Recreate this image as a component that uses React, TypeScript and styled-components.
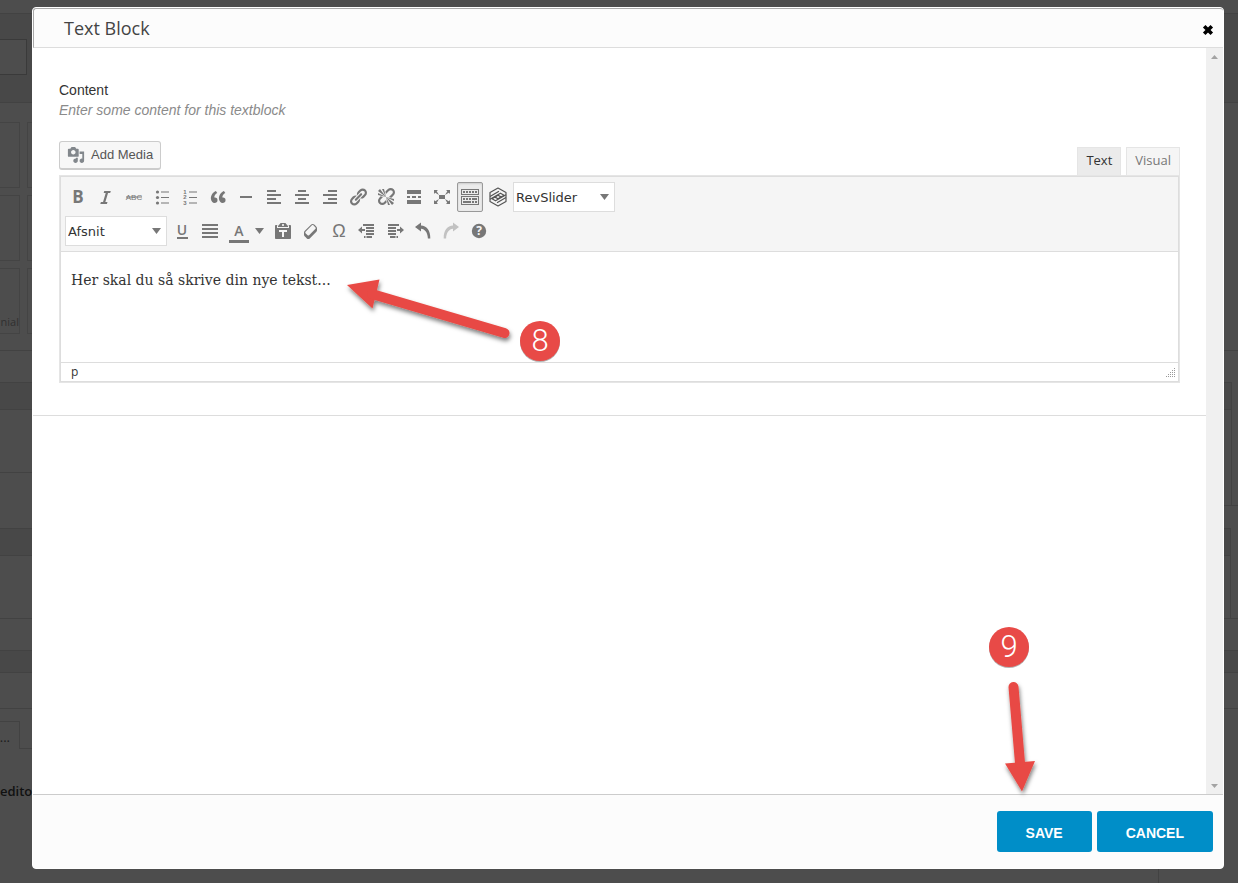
import React from "react";
import styled, { createGlobalStyle } from "styled-components";

const sans = '"Liberation Sans", Arial, sans-serif';
const open = '"Open Sans", sans-serif';
const wide = '"DejaVu Sans", Verdana, sans-serif';

const GlobalStyle = createGlobalStyle`
  * { box-sizing: border-box; }
  body { margin: 0; background: #4d4d4d; font-family: ${sans}; }
  button, select, textarea { font: inherit; color: inherit; margin: 0; }
  svg { display: block; flex: none; }
`;

/* ---------- dimmed page behind the dialog ---------- */

const Page = styled.div`
  display: grid;
  grid-template-columns: minmax(0, 1fr);
  min-height: 100vh;
`;

const Backdrop = styled.div`
  grid-area: 1 / 1;
  display: grid;
  grid-template-columns: 32px 1fr 14px;
  height: 100vh;
  overflow: hidden;
  background: #4d4d4d;
  color: #262626;
  font-family: ${open};
`;

const Strip = styled.div`
  display: flex;
  flex-direction: column;
  min-width: 0;
`;

const Band = styled.div<{ $h: number; $dark?: boolean; $line?: boolean; $inset?: number }>`
  flex: none;
  display: flex;
  height: ${(p) => p.$h}px;
  margin-right: ${(p) => p.$inset ?? 0}px;
  background: ${(p) => (p.$dark ? "#484848" : "transparent")};
  border-top: ${(p) => (p.$line ? "1px solid #424242" : "0")};
  border-right: ${(p) => (p.$inset ? "1px solid #424242" : "0")};
`;

const DimField = styled.div`
  width: 27px;
  height: 36px;
  margin-top: 25px;
  border: 1px solid #3a3a3a;
  border-left: 0;
  background: #4d4d4d;
`;

const DimTiles = styled.div`
  display: grid;
  grid-template-columns: 20px 5px;
  grid-auto-rows: 66px;
  gap: 7px;
  padding-top: 19px;
`;

const DimTile = styled.div<{ $first?: boolean }>`
  display: flex;
  align-items: flex-end;
  justify-content: flex-end;
  border: 1px solid #444;
  border-left-width: ${(p) => (p.$first ? 0 : 1)}px;
  border-right-width: ${(p) => (p.$first ? 1 : 0)}px;
  font-size: 11px;
  line-height: 22px;
  color: #303030;
`;

const DimTab = styled.div`
  display: flex;
  justify-content: flex-end;
  width: 20px;
  height: 28px;
  margin-top: 12px;
  padding-right: 9px;
  border-top: 1px solid #424242;
  border-right: 1px solid #424242;
  font-size: 13px;
  line-height: 30px;
  color: #1c1c1c;
`;

const DimBox = styled.div`
  width: 12px;
  margin-top: 12px;
  height: 28px;
  border-bottom: 1px solid #424242;
`;

const DimHeading = styled.div`
  font-size: 13px;
  font-weight: 600;
  line-height: 20px;
  color: #111;
`;

const DimFooter = styled.div`
  align-self: end;
  height: 14px;
  margin-right: 65px;
  border-right: 1px solid #424242;
`;

/* ---------- dialog ---------- */

const DialogArea = styled.div`
  grid-area: 1 / 1;
  z-index: 1;
  display: flex;
  padding: 7px 14px 14px 32px;
`;

const Dialog = styled.section`
  position: relative;
  flex: 1;
  min-width: 0;
  display: flex;
  flex-direction: column;
  border: 1px solid #fff;
  border-radius: 4px;
  background: #fff;
`;

const DialogHeader = styled.header`
  display: flex;
  align-items: center;
  justify-content: space-between;
  height: 40px;
  padding: 0 9px 0 30px;
  border: 0 solid #aaa;
  border-width: 1px 0 1px 1px;
  border-bottom-color: #ddd;
  border-top-left-radius: 3px;
  border-top-right-radius: 3px;
  background: #fcfcfc;
`;

const Title = styled.h1`
  margin: 0;
  font: 400 18px/24px ${open};
  color: #444;
`;

const CloseButton = styled.button`
  display: flex;
  padding: 4px 0 0;
  border: 0;
  background: none;
  cursor: pointer;
`;

const DialogBody = styled.div`
  flex: 1;
  display: flex;
`;

const Scroller = styled.main`
  flex: 1;
  min-width: 0;
`;

const ScrollTrack = styled.div`
  display: flex;
  flex-direction: column;
  justify-content: space-between;
  width: 17px;
  background: #f0f0f0;
`;

const ScrollButton = styled.button`
  display: flex;
  align-items: center;
  justify-content: center;
  height: 17px;
  padding: 0;
  border: 0;
  background: none;
`;

const Field = styled.div`
  padding: 32px 26px;
  border-bottom: 1px solid #ddd;
`;

const FieldLabel = styled.label`
  display: block;
  font-size: 14px;
  line-height: 20px;
  color: #333;
`;

const FieldHint = styled.p`
  margin: 0;
  font-size: 14px;
  line-height: 20px;
  font-style: italic;
  color: #8a8a8a;
`;

const EditorTop = styled.div`
  display: flex;
  justify-content: space-between;
  height: 34px;
  margin-top: 21px;
`;

const MediaButton = styled.button`
  display: flex;
  align-items: center;
  gap: 6px;
  height: 29px;
  padding: 0 7px;
  border: 1px solid #ccc;
  border-bottom-width: 2px;
  border-radius: 3px;
  background: #f7f7f7;
  font-size: 13px;
  line-height: 26px;
  color: #555;
  svg { color: #82878c; }
`;

const Tabs = styled.div`
  display: flex;
  align-items: flex-end;
  gap: 5px;
`;

const Tab = styled.button<{ $active?: boolean }>`
  height: 28px;
  padding: 0 8px 3px;
  border: 1px solid #e5e5e5;
  border-bottom: 0;
  background: ${(p) => (p.$active ? "#ebebeb" : "#f5f5f5")};
  font: 400 13px/24px ${open};
  color: ${(p) => (p.$active ? "#333" : "#777")};
`;

const EditorFrame = styled.div`
  border: 1px solid #e5e5e5;
`;

const Editor = styled.div`
  border: 1px solid #ddd;
`;

const Toolbar = styled.div`
  display: flex;
  flex-direction: column;
  gap: 4px;
  padding: 5px 4px;
  border-bottom: 1px solid #ddd;
  background: #f5f5f5;
`;

const ToolRow = styled.div`
  display: flex;
  gap: 2px;
`;

const ToolButton = styled.button<{ $pressed?: boolean; $w?: number; $faded?: boolean }>`
  display: flex;
  align-items: center;
  justify-content: center;
  gap: 6px;
  width: ${(p) => p.$w ?? 26}px;
  height: 30px;
  padding: 0;
  border: 1px solid ${(p) => (p.$pressed ? "#999" : "transparent")};
  border-radius: 2px;
  background: ${(p) => (p.$pressed ? "#ebebeb" : "none")};
  box-shadow: ${(p) => (p.$pressed ? "inset 0 1px 2px #ccc" : "none")};
  color: #777;
  svg { opacity: ${(p) => (p.$faded ? 0.4 : 1)}; }
`;

const SelectBox = styled.div`
  display: grid;
  grid-template-columns: minmax(0, 1fr);
  align-items: center;
  width: 102px;
  height: 30px;
  svg {
    grid-area: 1 / 1;
    justify-self: end;
    margin-right: 6px;
    pointer-events: none;
    color: #777;
  }
`;

const Select = styled.select`
  grid-area: 1 / 1;
  appearance: none;
  width: 100%;
  height: 30px;
  padding: 2px 20px 0 2px;
  border: 1px solid #ddd;
  border-radius: 0;
  background: #fff;
  font: 400 13px/20px ${wide};
  color: #333;
`;

const TextArea = styled.textarea`
  display: block;
  width: 100%;
  height: 110px;
  padding: 18px 10px;
  border: 0;
  outline: 0;
  resize: none;
  background: #fff;
  font: 400 14px/20px "DejaVu Serif", Georgia, serif;
  color: #333;
`;

const StatusBar = styled.div`
  display: flex;
  align-items: center;
  justify-content: space-between;
  height: 19px;
  padding: 0 2px 0 10px;
  border-top: 1px solid #ddd;
  font: 400 12px/18px ${open};
  color: #333;
`;

const DialogFooter = styled.footer`
  display: flex;
  justify-content: flex-end;
  gap: 5px;
  padding: 16px 10px;
  border-top: 1px solid #ccc;
  border-radius: 0 0 3px 3px;
  background: #fcfcfc;
`;

const ActionButton = styled.button`
  height: 41px;
  padding: 2px 29px 0;
  border: 0;
  border-radius: 3px;
  background: #008ec8;
  font: 700 14px/20px ${sans};
  color: #fff;
`;

/* ---------- tutorial markers drawn over the dialog ---------- */

const Marker = styled.div`
  position: absolute;
  pointer-events: none;
`;

const TopMarker = styled(Marker)`
  top: 262px;
  left: 307px;
`;

const BottomMarker = styled(Marker)`
  right: 173px;
  bottom: 66px;
`;

/* ---------- icons ---------- */

const glyphs: Record<string, string> = {
  media:
    "M13 11V4c0-.55-.45-1-1-1h-1.67L9 1H5L3.67 3H2c-.55 0-1 .45-1 1v7c0 .55.45 1 1 1h10c.55 0 1-.45 1-1zM7 4.5c1.38 0 2.5 1.12 2.5 2.5S8.38 9.5 7 9.5 4.5 8.38 4.5 7 5.62 4.5 7 4.5zM14 6h5v10.5c0 1.38-1.12 2.5-2.5 2.5S14 17.88 14 16.5s1.12-2.5 2.5-2.5c.17 0 .34.02.5.05V9h-3V6zm-4 8.05V13h2v3.5c0 1.38-1.12 2.5-2.5 2.5S7 17.88 7 16.5 8.12 14 9.5 14c.17 0 .34.02.5.05z",
  italic: "M14.78 4h-6.500l-.6 2h2.050l-2.700 9H4.900l-.6 2h6.600l.6-2H9.350l2.700-9h2.130z",
  quote:
    "M9.49 13.22c0-.74-.2-1.38-.61-1.9-.62-.78-1.83-.88-2.53-.72-.29-1.65 1.11-3.75 2.92-4.65L7.88 4c-2.73 1.3-5.42 4.28-4.96 8.05C3.21 14.43 4.59 16 6.54 16c.85 0 1.56-.25 2.12-.75s.83-1.18.83-2.03zm8.05 0c0-.74-.2-1.38-.61-1.9-.63-.78-1.83-.88-2.53-.72-.29-1.65 1.11-3.75 2.92-4.65L15.93 4c-2.73 1.3-5.41 4.28-4.95 8.05.29 2.38 1.66 3.95 3.61 3.95.85 0 1.56-.25 2.12-.75s.83-1.18.83-2.03z",
  rule: "M4 9h12v2H4z",
  left: "M12 5V3H3v2h9zm5 4V7H3v2h14zm-5 4v-2H3v2h9zm5 4v-2H3v2h14z",
  center: "M14 5V3H6v2h8zm3 4V7H3v2h14zm-3 4v-2H6v2h8zm3 4v-2H3v2h14z",
  right: "M17 5V3H8v2h9zm0 4V7H3v2h14zm0 4v-2H8v2h9zm0 4v-2H3v2h14z",
  justify: "M2 3h16v2H2V3zm0 4h16v2H2V7zm0 4h16v2H2v-2zm0 4h16v2H2v-2z",
  link: "M17.74 2.76c1.68 1.69 1.68 4.41 0 6.1l-1.53 1.52c-1.12 1.12-2.7 1.47-4.14 1.09l2.62-2.61.76-.77.76-.76c.84-.84.84-2.2 0-3.04-.84-.85-2.2-.85-3.04 0l-.77.76-3.38 3.38c-.37-1.44-.02-3.02 1.1-4.14l1.52-1.53c1.69-1.68 4.42-1.68 6.1 0zM8.59 13.43l5.34-5.34c.42-.42.42-1.1 0-1.52-.44-.43-1.13-.39-1.53 0l-5.33 5.34c-.42.42-.42 1.1 0 1.52.44.43 1.13.39 1.52 0zm-.76 2.29l4.14-4.15c.38 1.44.03 3.02-1.09 4.14l-1.52 1.53c-1.69 1.68-4.41 1.68-6.1 0-1.68-1.68-1.68-4.42 0-6.1l1.53-1.52c1.12-1.12 2.7-1.47 4.14-1.1l-4.14 4.15c-.85.84-.85 2.2 0 3.05.84.84 2.2.84 3.04 0z",
  unlink:
    "M17.74 2.26c1.68 1.69 1.68 4.41 0 6.1l-1.53 1.52c-.32.33-.69.58-1.08.77L13 10l1.69-1.64.76-.77.76-.76c.84-.84.84-2.2 0-3.04-.84-.85-2.2-.85-3.04 0l-.77.76-.76.76L10 7l-.65-2.14c.19-.38.44-.75.77-1.07l1.52-1.53c1.69-1.68 4.42-1.68 6.1 0zM2 4l8 6-6-8zm4-2l4 8-2-8H6zM2 6l8 4-8-2V6zm7.36 7.69L10 13l.74 2.35-1.38 1.39c-1.69 1.68-4.41 1.68-6.1 0-1.68-1.68-1.68-4.42 0-6.1l1.39-1.38L7 10l-.69.64-1.52 1.53c-.85.84-.85 2.2 0 3.04.84.85 2.2.85 3.04 0zM18 16l-8-6 6 8zm-4 2l-4-8 2 8h2zm4-4l-8-4 8 2v2z",
  more: "M17 7V3H3v4h14zM6 11V9H3v2h3zm6 0V9H8v2h4zm5 0V9h-3v2h3zm0 6v-4H3v4h14z",
  expand:
    "M7 8h6v4H7zm-5 5v4h4l-1.2-1.2L7 12l-3.8 2.2M14 17h4v-4l-1.2 1.2L13 12l2.2 3.8M14 3l1.3 1.3L13 8l3.8-2.2L18 7V3M6 3H2v4l1.2-1.2L7 8 4.7 4.3",
  keyboard:
    "M19 2v6H1V2h18zm-1 5V3H2v4h16zM5 4v2H3V4h2zm3 0v2H6V4h2zm3 0v2H9V4h2zm3 0v2h-2V4h2zm3 0v2h-2V4h2zm2 5v9H1V9h18zm-1 8v-7H2v7h16zM5 11v2H3v-2h2zm3 0v2H6v-2h2zm3 0v2H9v-2h2zm6 0v2h-5v-2h5zm-6 3v2H3v-2h8zm3 0v2h-2v-2h2zm3 0v2h-2v-2h2z",
  paste:
    "M12.38 2L15 5v1H5V5l2.64-3h4.74zM10 5c.55 0 1-.44 1-1 0-.55-.45-1-1-1s-1 .45-1 1c0 .56.45 1 1 1zm5.45-1H17c.55 0 1 .45 1 1v12c0 .56-.45 1-1 1H3c-.55 0-1-.44-1-1V5c0-.55.45-1 1-1h1.55L4 4.63V7h12V4.63zM14 11V9H6v2h3v5h2v-5h3z",
  eraser:
    "M14.29 4.59l1.1 1.11c.41.4.61.94.61 1.47v2.12c0 .53-.2 1.07-.61 1.47l-6.63 6.63c-.4.41-.94.61-1.47.61s-1.07-.2-1.47-.61l-1.11-1.1-1.1-1.11c-.41-.4-.61-.94-.61-1.47v-2.12c0-.54.2-1.07.61-1.48l6.63-6.62c.4-.41.94-.61 1.47-.61s1.06.2 1.47.61zm-6.21 9.7l6.42-6.42c.39-.39.39-1.03 0-1.43L12.36 4.3c-.19-.19-.45-.29-.72-.29s-.52.1-.71.29l-6.42 6.42c-.39.4-.39 1.04 0 1.43l2.14 2.14c.38.38 1.04.38 1.43 0z",
  outdent: "M6 3h11v2H6zM9 6h8v2H9zM9 9h8v2H9zM9 12h8v2H9zM7 15h1.500v2H7zM9.500 15h5.500v2H9.500zM1 9l4-3.500V8h3v2H5v2.500z",
  indent: "M3 3h11v2H3zM3 6h8v2H3zM3 9h8v2H3zM3 12h8v2H3zM5 15h5.500v2H5zM11.500 15H13v2h-1.500zM19 9l-4-3.500V8h-3v2h3v2.500z",
  undo: "M8 1.500v3C13.500 5 17.500 9 17.300 17.500h-2.400C14.600 11.500 12 8.200 8 7.800v2.700L2 6z",
  redo: "M12 1.500v3C6.500 5 2.500 9 2.700 17.500h2.400C5.400 11.500 8 8.200 12 7.800v2.700L18 6z",
};

const Icon = ({ name, size = 20 }: { name: string; size?: number }) => (
  <svg width={size} height={size} viewBox="0 0 20 20" fill="currentColor" fillRule="evenodd" aria-hidden="true">
    <path d={glyphs[name]} />
  </svg>
);

const TextIcon = ({ children }: { children: React.ReactNode }) => (
  <svg
    width="20"
    height="20"
    viewBox="0 0 20 20"
    overflow="visible"
    fill="currentColor"
    textAnchor="middle"
    aria-hidden="true"
  >
    {children}
  </svg>
);

const Caret = () => (
  <svg width="9" height="6" viewBox="0 0 9 6" fill="currentColor" aria-hidden="true">
    <path d="M0 0h9L4.500 6z" />
  </svg>
);

const ListLines = () => <path d="M9 4.500h8v1H9zM9 10h8v1H9zM9 15.500h8v1H9z" />;

const BoldIcon = () => (
  <TextIcon>
    <text x="10" y="16" fontFamily={open} fontWeight="700" fontSize="17">B</text>
  </TextIcon>
);

const StrikeIcon = () => (
  <TextIcon>
    <text x="10" y="13" fontFamily={sans} fontSize="8">ABC</text>
    <path d="M2 9.500h16v1H2z" />
  </TextIcon>
);

const BulletIcon = () => (
  <TextIcon>
    <circle cx="5.500" cy="5" r="1.600" />
    <circle cx="5.500" cy="10.500" r="1.600" />
    <circle cx="5.500" cy="16" r="1.600" />
    <ListLines />
  </TextIcon>
);

const NumberIcon = () => (
  <TextIcon>
    <g fontFamily={sans} fontSize="6" fontWeight="700">
      <text x="5" y="7">1</text>
      <text x="5" y="12">2</text>
      <text x="5" y="18">3</text>
    </g>
    <ListLines />
  </TextIcon>
);

const BuilderIcon = () => (
  <TextIcon>
    <g fill="none" stroke="#555" strokeWidth="1.200" strokeLinejoin="round">
      <path d="M10 1l8 4.500v9L10 19l-8-4.500v-9z" />
      <path d="M2 12.300L12.500 6.200l3.500 2L10 11.700l-3-1.600" />
      <path d="M18 7.700L7.500 13.800l-3.500-2L10 8.300l3 1.600" />
      <path d="M2 9.500L11 4.200M18 10.500L9 15.800" />
    </g>
  </TextIcon>
);

const UnderlineIcon = () => (
  <TextIcon>
    <text x="10" y="14" fontFamily={open} fontWeight="600" fontSize="14">U</text>
    <path d="M5 16h11v2H5z" />
  </TextIcon>
);

const ColorIcon = () => (
  <TextIcon>
    <text x="10" y="15" fontFamily={open} fontWeight="600" fontSize="14">A</text>
    <path d="M0 19h20v3H0z" />
  </TextIcon>
);

const OmegaIcon = () => (
  <TextIcon>
    <text x="10" y="16" fontFamily={sans} fontSize="18">Ω</text>
  </TextIcon>
);

const HelpIcon = () => (
  <TextIcon>
    <circle cx="10" cy="10" r="7.200" />
    <text x="10" y="14" fill="#f5f5f5" fontFamily={open} fontWeight="700" fontSize="12">?</text>
  </TextIcon>
);

type Tool = { label: string; icon: React.ReactNode; pressed?: boolean; faded?: boolean };

const named = (label: string, name: string): Tool => ({ label, icon: <Icon name={name} /> });

const firstRow: Tool[] = [
  { label: "Bold", icon: <BoldIcon /> },
  named("Italic", "italic"),
  { label: "Strikethrough", icon: <StrikeIcon /> },
  { label: "Bulleted list", icon: <BulletIcon /> },
  { label: "Numbered list", icon: <NumberIcon /> },
  named("Blockquote", "quote"),
  named("Horizontal line", "rule"),
  named("Align left", "left"),
  named("Align center", "center"),
  named("Align right", "right"),
  named("Insert link", "link"),
  named("Remove link", "unlink"),
  named("Read more", "more"),
  named("Fullscreen", "expand"),
  { ...named("Toolbar toggle", "keyboard"), pressed: true },
  { label: "Shortcodes", icon: <BuilderIcon /> },
];

const alignRow: Tool[] = [{ label: "Underline", icon: <UnderlineIcon /> }, named("Justify", "justify")];

const lastRow: Tool[] = [
  named("Paste as text", "paste"),
  named("Clear formatting", "eraser"),
  { label: "Special character", icon: <OmegaIcon /> },
  named("Decrease indent", "outdent"),
  named("Increase indent", "indent"),
  named("Undo", "undo"),
  { ...named("Redo", "redo"), faded: true },
  { label: "Keyboard shortcuts", icon: <HelpIcon /> },
];

const Tools = ({ items }: { items: Tool[] }) => (
  <>
    {items.map((t) => (
      <ToolButton key={t.label} type="button" aria-label={t.label} $pressed={t.pressed} $faded={t.faded}>
        {t.icon}
      </ToolButton>
    ))}
  </>
);

const ToolSelect = ({ label, value }: { label: string; value: string }) => (
  <SelectBox>
    <Select aria-label={label} defaultValue={value}>
      <option>{value}</option>
    </Select>
    <Caret />
  </SelectBox>
);

const DimmedPage = () => (
  <Backdrop aria-hidden="true">
    <Strip>
      <Band $h={13} />
      <Band $h={89} $dark $line>
        <DimField />
      </Band>
      <Band $h={248} $line>
        <DimTiles>
          <DimTile $first />
          <DimTile />
          <DimTile $first />
          <DimTile />
          <DimTile $first>nial</DimTile>
          <DimTile />
        </DimTiles>
      </Band>
      <Band $h={32} $line />
      <Band $h={27} $dark $line />
      <Band $h={63} $line />
      <Band $h={56} $line />
      <Band $h={27} $dark $line />
      <Band $h={63} $line />
      <Band $h={32} $line />
      <Band $h={22} $dark $line />
      <Band $h={36} $line />
      <Band $h={73} $line>
        <DimTab>...</DimTab>
        <DimBox />
      </Band>
      <DimHeading>editor</DimHeading>
    </Strip>
    <DimFooter />
    <Strip>
      <Band $h={13} />
      <Band $h={89} $dark $line />
      <Band $h={248} $line />
      <Band $h={32} $line />
      <Band $h={27} $dark $line $inset={6} />
      <Band $h={96} $line $inset={6} />
      <Band $h={23} $line />
      <Band $h={27} $dark $line $inset={7} />
      <Band $h={63} $line $inset={7} />
      <Band $h={32} $line />
      <Band $h={22} $dark $line />
      <Band $h={36} $line />
      <Band $h={73} $line />
    </Strip>
  </Backdrop>
);

const MarkerShadow = ({ id }: { id: string }) => (
  <filter id={id} x="-20%" y="-20%" width="140%" height="150%">
    <feDropShadow dx="1" dy="3" stdDeviation="2" floodColor="#000" floodOpacity="0.5" />
  </filter>
);

const Badge = ({ cx, cy, n }: { cx: number; cy: number; n: number }) => (
  <>
    <circle cx={cx} cy={cy + 1} r="20" fill="#000" opacity="0.3" />
    <circle cx={cx} cy={cy} r="20" fill="#e84a47" />
    <text x={cx} y={cy + 10} textAnchor="middle" fontFamily={`Roboto, ${sans}`} fontWeight="300" fontSize="31" fill="#fff">
      {n}
    </text>
  </>
);

export default function App() {
  return (
    <>
      <GlobalStyle />
      <Page>
        <DimmedPage />
        <DialogArea>
          <Dialog role="dialog" aria-labelledby="dialog-title">
            <DialogHeader>
              <Title id="dialog-title">Text Block</Title>
              <CloseButton type="button" aria-label="Close">
                <svg width="12" height="12" viewBox="0 0 12 12" aria-hidden="true">
                  <path d="M2.200 2.200l7.600 7.600M9.800 2.200l-7.600 7.600" stroke="#000" strokeWidth="3.600" />
                </svg>
              </CloseButton>
            </DialogHeader>

            <DialogBody>
              <Scroller>
                <Field>
                  <FieldLabel htmlFor="content">Content</FieldLabel>
                  <FieldHint>Enter some content for this textblock</FieldHint>
                  <EditorTop>
                    <MediaButton type="button">
                      <Icon name="media" size={18} />
                      Add Media
                    </MediaButton>
                    <Tabs role="tablist">
                      <Tab type="button" role="tab" aria-selected="true" $active>
                        Text
                      </Tab>
                      <Tab type="button" role="tab" aria-selected="false">
                        Visual
                      </Tab>
                    </Tabs>
                  </EditorTop>
                  <EditorFrame>
                    <Editor>
                      <Toolbar>
                        <ToolRow>
                          <Tools items={firstRow} />
                          <ToolSelect label="Slider" value="RevSlider" />
                        </ToolRow>
                        <ToolRow>
                          <ToolSelect label="Paragraph format" value="Afsnit" />
                          <Tools items={alignRow} />
                          <ToolButton type="button" aria-label="Text color" $w={43}>
                            <ColorIcon />
                            <Caret />
                          </ToolButton>
                          <Tools items={lastRow} />
                        </ToolRow>
                      </Toolbar>
                      <TextArea id="content" spellCheck={false} defaultValue="Her skal du så skrive din nye tekst..." />
                      <StatusBar>
                        <span>p</span>
                        <svg width="11" height="11" viewBox="0 0 11 11" aria-hidden="true">
                          <g stroke="#999" strokeDasharray="1 1">
                            <path d="M9 1.500h2M7 3.500h4M5 5.500h6M3 7.500h8M1 9.500h10" />
                          </g>
                        </svg>
                      </StatusBar>
                    </Editor>
                  </EditorFrame>
                </Field>
              </Scroller>
              <ScrollTrack>
                <ScrollButton type="button" aria-label="Scroll up">
                  <svg width="7" height="4" viewBox="0 0 7 4" aria-hidden="true">
                    <path d="M0 4h7L3.500 0z" fill="#a3a3a3" />
                  </svg>
                </ScrollButton>
                <ScrollButton type="button" aria-label="Scroll down">
                  <svg width="7" height="4" viewBox="0 0 7 4" aria-hidden="true">
                    <path d="M0 0h7L3.500 4z" fill="#a3a3a3" />
                  </svg>
                </ScrollButton>
              </ScrollTrack>
            </DialogBody>

            <DialogFooter>
              <ActionButton type="button">SAVE</ActionButton>
              <ActionButton type="button">CANCEL</ActionButton>
            </DialogFooter>

            <TopMarker>
              <svg width="230" height="100" viewBox="340 270 230 100">
                <defs>
                  <MarkerShadow id="arrow-a" />
                </defs>
                <g filter="url(#arrow-a)" fill="#e84a44">
                  <path d="M347 285l32.500-5.500-7 29z" />
                  <path d="M372 294l132.500 39" stroke="#e84a44" strokeWidth="10" strokeLinecap="round" />
                </g>
                <Badge cx={540} cy={341} n={8} />
              </svg>
            </TopMarker>
            <BottomMarker>
              <svg width="70" height="190" viewBox="980 612 70 190">
                <defs>
                  <MarkerShadow id="arrow-b" />
                </defs>
                <g filter="url(#arrow-b)" fill="#e84a44">
                  <path d="M1022 791.500l-17-28 30-2.500z" />
                  <path d="M1013.500 687l6.500 76" stroke="#e84a44" strokeWidth="10" strokeLinecap="round" />
                </g>
                <Badge cx={1009} cy={647} n={9} />
              </svg>
            </BottomMarker>
          </Dialog>
        </DialogArea>
      </Page>
    </>
  );
}
